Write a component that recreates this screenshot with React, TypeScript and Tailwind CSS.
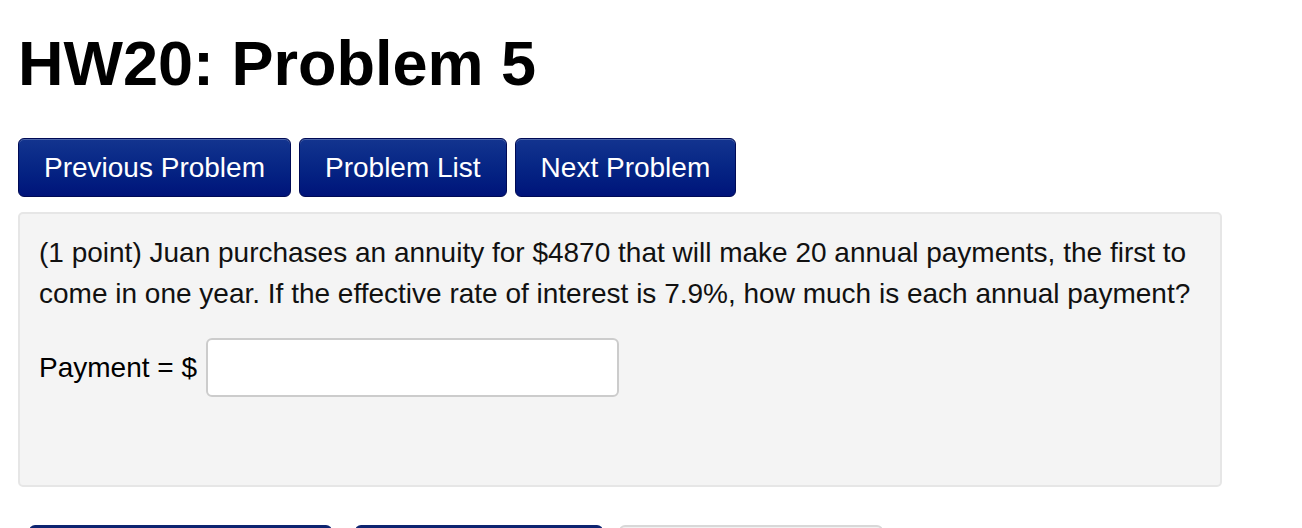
import { useState } from 'react'

const NAV = ['Previous Problem', 'Problem List', 'Next Problem']

function NavButton({ label }: { label: string }) {
  return (
    <button
      type="button"
      className="h-[59px] px-[25px] rounded-[6px] border border-[#000a55] bg-gradient-to-b from-[#13348f] to-[#00137a] text-white text-[28px] leading-none shadow-[inset_0_1px_0_rgba(255,255,255,0.25)]"
    >
      {label}
    </button>
  )
}

export default function App() {
  const [answer, setAnswer] = useState('')

  return (
    <div className="h-[528px] bg-white text-black font-['Liberation_Sans',Arial,sans-serif] overflow-hidden">
      <div className="pl-[18px] pr-[80px]">
        <h1 className="pt-[25px] text-[63px] font-bold leading-[76px]">HW20: Problem 5</h1>

        <div className="mt-[37px] flex gap-[8px]">
          {NAV.map(n => (
            <NavButton key={n} label={n} />
          ))}
        </div>

        {/* Problem body */}
        <div className="mt-[15px] w-[1204px] h-[275px] rounded-[5px] border-2 border-[#e6e6e6] bg-[#f4f4f4] px-[19px] pt-[18px]">
          <p className="text-[28px] leading-[41px] text-[#111]">
            (1 point) Juan purchases an annuity for $4870 that will make 20 annual payments, the first to come in one year. If the effective rate of interest is 7.9%, how much is each annual payment?
          </p>
          <div className="mt-[24px] flex items-center gap-[9px]">
            <span className="text-[28px]">Payment = $</span>
            <input
              value={answer}
              onChange={e => setAnswer(e.target.value)}
              className="w-[413px] h-[59px] rounded-[6px] border-2 border-[#cccccc] bg-white px-3 text-[28px] outline-none"
            />
          </div>
        </div>

        {/* Submit row, cut off at the bottom */}
        <div className="mt-[38px] flex pl-[11px]">
          <div className="w-[303px] h-[30px] rounded-[6px] bg-[#0d2470]" />
          <div className="ml-[23px] w-[248px] h-[30px] rounded-[6px] bg-[#0d2470]" />
          <div className="ml-[16px] w-[264px] h-[30px] rounded-[6px] border-2 border-[#d8d8d8] bg-[#f2f2f2]" />
        </div>
      </div>
    </div>
  )
}
